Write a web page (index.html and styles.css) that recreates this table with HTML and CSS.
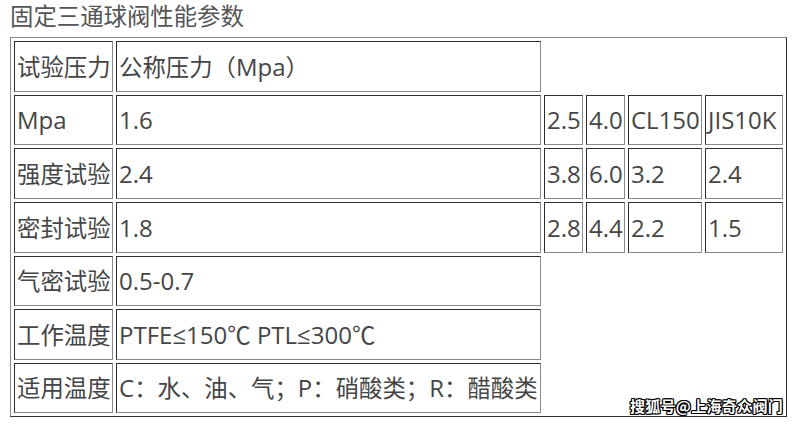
FILE: index.html
```html
<!DOCTYPE html>
<html lang="zh-CN">
<head>
<meta charset="utf-8">
<title>固定三通球阀性能参数</title>
<link rel="stylesheet" href="styles.css">
</head>
<body>
<div class="page">
  <h1 class="title">固定三通球阀性能参数</h1>
  <table class="params">
    <colgroup>
      <col class="c1"><col class="c2"><col class="c3"><col class="c4"><col class="c5"><col class="c6">
    </colgroup>
    <tbody>
      <tr class="r51"><td>试验压力</td><td>公称压力（<span class="lat">Mpa</span>）</td></tr>
      <tr class="r50"><td class="lat">Mpa</td><td class="lat">1.6</td><td class="lat">2.5</td><td class="lat">4.0</td><td class="lat">CL150</td><td class="lat">JIS10K</td></tr>
      <tr class="r51"><td>强度试验</td><td class="lat">2.4</td><td class="lat">3.8</td><td class="lat">6.0</td><td class="lat">3.2</td><td class="lat">2.4</td></tr>
      <tr class="r51"><td>密封试验</td><td class="lat">1.8</td><td class="lat">2.8</td><td class="lat">4.4</td><td class="lat">2.2</td><td class="lat">1.5</td></tr>
      <tr class="r50"><td>气密试验</td><td class="lat">0.5-0.7</td></tr>
      <tr class="r51"><td>工作温度</td><td class="lat">PTFE≤150<span class="cjk">℃</span> PTL≤300<span class="cjk">℃</span></td></tr>
      <tr class="r50"><td>适用温度</td><td><span class="lat">C</span>：水、油、气；<span class="lat">P</span>：硝酸类；<span class="lat">R</span>：醋酸类</td></tr>
    </tbody>
  </table>
  <div class="watermark">搜狐号@上海奇众阀门</div>
</div>
</body>
</html>
```
FILE: styles.css
```css
html, body {
  margin: 0;
  padding: 0;
  background: #ffffff;
}

.page {
  position: relative;
  width: 798px;
  height: 424px;
  padding: 0 0 0 10px;
  box-sizing: border-box;
  font-family: "Open Sans", "Noto Sans CJK SC", sans-serif;
  color: #454545;
}

.title {
  margin: 0;
  height: 37px;
  font-size: 23.4px;
  font-weight: normal;
  line-height: 32px;
  color: #555555;
  white-space: nowrap;
}

.params {
  table-layout: fixed;
  width: 777px;
  border-collapse: separate;
  border-spacing: 3px;
  border-style: solid;
  border-width: 1px;
  border-color: #8a8a8a #2e2e2e #2e2e2e #8a8a8a;
}

.c1 { width: 99px; }
.c2 { width: 425px; }
.c3 { width: 39px; }
.c4 { width: 39px; }
.c5 { width: 74px; }
.c6 { width: 78px; }

.params td {
  box-sizing: border-box;
  padding: 0 0 0 2px;
  border-style: solid;
  border-width: 1px;
  border-color: #2e2e2e #8a8a8a #8a8a8a #2e2e2e;
  font-size: 23.4px;
  line-height: 30px;
  vertical-align: middle;
  white-space: nowrap;
  overflow: hidden;
}

.params .lat {
  font-size: 24px;
}

.params .cjk {
  font-family: "Noto Sans CJK SC", sans-serif;
  font-size: 23.4px;
}

.r51 td { height: 51px; }
.r50 td { height: 50px; }

.watermark {
  position: absolute;
  right: 15px;
  bottom: 9px;
  font-family: "Noto Sans CJK SC", sans-serif;
  font-size: 15px;
  font-weight: bold;
  line-height: 18px;
  letter-spacing: 0.3px;
  color: #ffffff;
  text-shadow: 1px 0 0 #000, -1px 0 0 #000, 0 1px 0 #000, 0 -1px 0 #000,
               1px 1px 0 #000, -1px -1px 0 #000, 1px -1px 0 #000, -1px 1px 0 #000;
}
```
